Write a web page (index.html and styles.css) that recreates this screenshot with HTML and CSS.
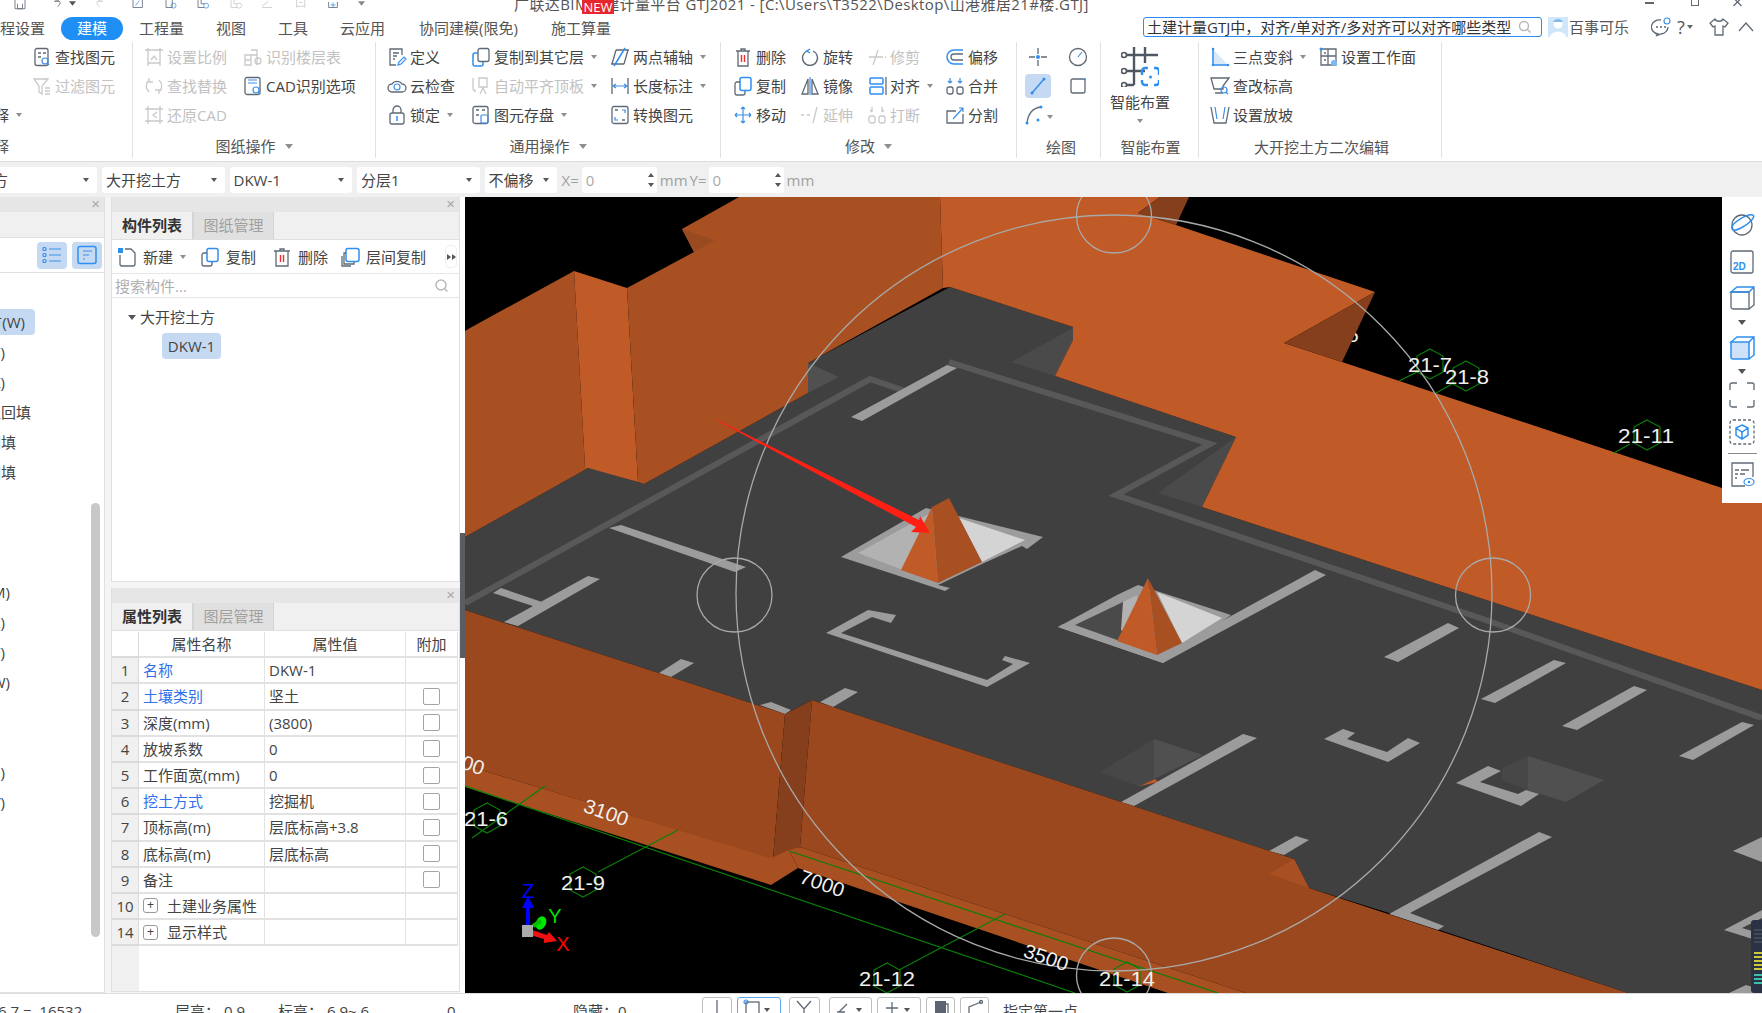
FILE: index.html
```html
<!DOCTYPE html>
<html lang="zh-CN">
<head>
<meta charset="utf-8">
<title>GTJ2021</title>
<link rel="stylesheet" href="styles.css">
</head>
<body>
<div class="app">
  <header class="title">
    <div class="qa">
      <svg class="q q1" viewBox="0 0 20 16"><path class="g" d="M2-6h16v20H2zM6 6v8h8V6"/></svg>
      <svg class="q q2" viewBox="0 0 20 16"><path class="g" d="M5 2c8-3 12 3 4 9M12 2H4"/></svg>
      <svg class="car-svg" viewBox="0 0 8 5"><path d="M0 0h8L4 5z" fill="#555"/></svg>
      <svg class="q q3" viewBox="0 0 20 16"><path class="l" d="M15 2C7-1 3 5 11 11M8 2h8"/></svg>
      <svg class="q q4" viewBox="0 0 20 16"><path class="g" d="M2-6h15v18H2z"/><path class="b" d="M6 9l6-8"/></svg>
      <svg class="q q5" viewBox="0 0 20 16"><path class="g" d="M2-6h10v18H2z"/><circle class="b" cx="14" cy="9" r="4"/></svg>
      <svg class="q q6" viewBox="0 0 20 16"><path class="g" d="M2-6v18h10M7-6v12h6"/><circle class="b" cx="15" cy="9" r="4"/></svg>
      <svg class="q q7" viewBox="0 0 20 16"><path class="l" d="M2-6v18h10M7-6v12h6"/><circle class="l" cx="15" cy="9" r="4"/></svg>
      <svg class="q q8" viewBox="0 0 20 16"><path class="l" d="M2 10l10-8M2 12h16"/></svg>
      <svg class="q q9" viewBox="0 0 20 16"><path class="l" d="M3 12V-4M16 12V-4M3 10h13M7 4h5"/></svg>
      <svg class="q q10" viewBox="0 0 20 16"><path class="b" d="M10 4v8M6 8h8"/><path class="g" d="M3 3v9h14V3"/></svg>
      <svg class="car-svg qc" viewBox="0 0 8 5"><path d="M0 0h8L4 5z" fill="#888"/></svg>
    </div>
    <div class="title-text">广联达BIM土建计量平台 GTJ2021 - [C:\Users\T3522\Desktop\山港雅居21#楼.GTJ]<b class="new">NEW</b></div>
    <div class="win">
      <i class="win-min"></i>
      <i class="win-max"></i>
      <svg class="win-x" viewBox="0 0 10 10"><path class="g" d="M1-2l8 8M9-2L1 6"/></svg>
    </div>
  </header>

  <nav class="tabs">
    <span class="tab first">工程设置</span>
    <span class="tab on">建模</span>
    <span class="tab">工程量</span>
    <span class="tab">视图</span>
    <span class="tab">工具</span>
    <span class="tab">云应用</span>
    <span class="tab tab-co">协同建模(限免)</span>
    <span class="tab tab-su">施工算量</span>
    <div class="tab-right">
      <div class="search">
        <span>土建计量GTJ中，对齐/单对齐/多对齐可以对齐哪些类型</span>
        <svg class="sm" viewBox="0 0 14 14"><circle class="l2" cx="6" cy="6" r="4.5"/><path class="l2" d="M9.5 9.5l3 3"/></svg>
      </div>
      <div class="avatar"><svg viewBox="0 0 20 20"><rect width="20" height="20" fill="#cfe6fb"/><circle cx="10" cy="7" r="4.5" fill="#fff"/><path d="M2 20c1-7 15-7 16 0z" fill="#fff"/><path d="M5 5c2-4 8-4 10 0z" fill="#7db9ee"/></svg></div>
      <span class="user">百事可乐</span>
      <svg class="ti chat" viewBox="0 0 20 20"><path class="g" d="M10 3a8 7 0 1 0-3 14l-2 2 5-2a8 7 0 0 0 7-7"/><circle cx="6" cy="10" r="1" fill="#667"/><circle cx="10" cy="10" r="1" fill="#667"/><circle cx="14" cy="10" r="1" fill="#667"/><circle class="b" cx="16" cy="4" r="3"/></svg>
      <span class="help">?<i class="car tiny"></i></span>
      <svg class="ti shirt" viewBox="0 0 20 20"><path class="g" d="M6 2L1 6l3 4 2-1v9h8V9l2 1 3-4-5-4c-1 3-7 3-8 0z"/></svg>
      <svg class="ti chev" viewBox="0 0 20 20"><path class="g" d="M3 14l7-8 7 8"/></svg>
    </div>
  </nav>

  <section class="ribbon">
    <div class="grp g0">
      <div class="body">
        <div class="col c0">
          <div class="it"><svg class="ic" viewBox="0 0 20 20"><rect class="g" x="3" y="1.5" width="13" height="17" rx="2"/><path class="g" d="M6 6h3M11 6h3M6 10h3"/><circle class="b" cx="13" cy="14" r="3"/><path class="b" d="M15 16l2 2"/></svg><span>查找图元</span></div>
          <div class="it off"><svg class="ic" viewBox="0 0 20 20"><path class="l" d="M2 3h14l-6 7v8l-3-2v-6zM13 12h5M13 15h5M13 18h5"/></svg><span>过滤图元</span></div>
          <div class="it neg"><span>图纸注释</span><i class="car"></i></div>
        </div>
      </div>
      <div class="lab lab0">图纸注释</div>
    </div>

    <div class="grp g1">
      <div class="body">
        <div class="col c1">
          <div class="it off"><svg class="ic" viewBox="0 0 20 20"><path class="l" d="M1 3h18M4 1v18M16 1v18M4 16h12M7 13l3-4 3 4"/></svg><span>设置比例</span></div>
          <div class="it off"><svg class="ic" viewBox="0 0 20 20"><path class="l" d="M4 5a8 8 0 0 0 1 11M16 15a8 8 0 0 0-1-11M5 2v4h4M15 18v-4h-4"/></svg><span>查找替换</span></div>
          <div class="it off"><svg class="ic" viewBox="0 0 20 20"><path class="l" d="M1 4h18M4 1v18M16 1v18M1 16h18M13 7l-4 3 4 3"/></svg><span>还原CAD</span></div>
        </div>
        <div class="col c2">
          <div class="it off"><svg class="ic" viewBox="0 0 20 20"><path class="l" d="M2 18V8h6v10zM8 3h6v15M2 13h6M8 8h6"/><circle class="l" cx="15" cy="14" r="3"/></svg><span>识别楼层表</span></div>
          <div class="it"><svg class="ic" viewBox="0 0 20 20"><rect class="g" x="2" y="1.5" width="15" height="17" rx="2"/><path class="b" d="M5 7h9M5 4h9"/><circle class="b" cx="13" cy="14" r="3"/><path class="b" d="M15 16l2 2"/></svg><span>CAD识别选项</span></div>
          <div class="it"></div>
        </div>
      </div>
      <div class="lab">图纸操作<i class="car"></i></div>
    </div>

    <div class="grp g2">
      <div class="body">
        <div class="col c3">
          <div class="it"><svg class="ic" viewBox="0 0 20 20"><path class="g" d="M15 8V2H3v16h6M6 6h6M6 9h4M6 12h2"/><path class="b" d="M11 18l1-3 5-5 2 2-5 5z"/></svg><span>定义</span></div>
          <div class="it"><svg class="ic" viewBox="0 0 20 20"><path class="g" d="M5 16a4 4 0 0 1 0-8 6 6 0 0 1 10 0 4 4 0 0 1 0 8z"/><circle class="b" cx="10" cy="11" r="3"/></svg><span>云检查</span></div>
          <div class="it"><svg class="ic" viewBox="0 0 20 20"><rect class="g" x="3" y="8" width="14" height="11" rx="2"/><path class="g" d="M6 8V5a4 4 0 0 1 8 0v3"/><path class="b2" d="M10 11v5"/></svg><span>锁定</span><i class="car"></i></div>
        </div>
        <div class="col c4">
          <div class="it"><svg class="ic" viewBox="0 0 20 20"><rect class="g" x="7" y="1.5" width="11" height="13" rx="2"/><path class="b2" d="M7 6H4a2 2 0 0 0-2 2v9a2 2 0 0 0 2 2h6a2 2 0 0 0 2-2v-2"/></svg><span>复制到其它层</span><i class="car"></i></div>
          <div class="it off"><svg class="ic" viewBox="0 0 20 20"><path class="l" d="M2 2v10a3 3 0 0 0 3 3M8 2h8v9h-8zM9 18l3-6 3 6"/></svg><span>自动平齐顶板</span><i class="car"></i></div>
          <div class="it"><svg class="ic" viewBox="0 0 20 20"><rect class="g" x="2" y="1.5" width="15" height="17" rx="2"/><path class="g" d="M5 5h3M11 5h3M5 10h3"/><rect class="b" x="10" y="10" width="7" height="8" rx="1"/></svg><span>图元存盘</span><i class="car"></i></div>
        </div>
        <div class="col c5">
          <div class="it"><svg class="ic" viewBox="0 0 20 20"><path class="g" d="M6 3h13M1 17h13M6 3L2 17M18 3l-4 14"/><path class="b2" d="M15 1L4 19"/></svg><span>两点辅轴</span><i class="car"></i></div>
          <div class="it"><svg class="ic" viewBox="0 0 20 20"><path class="g" d="M2 2v16M18 2v16"/><path class="b" d="M3 10h14M3 10l3-2M3 10l3 2M17 10l-3-2M17 10l-3 2"/></svg><span>长度标注</span><i class="car"></i></div>
          <div class="it"><svg class="ic" viewBox="0 0 20 20"><rect class="g" x="2" y="1.5" width="16" height="17" rx="2"/><path class="b" d="M12 5h3v3M8 15H5v-3"/><path class="g" d="M5 5h3M12 15h3"/></svg><span>转换图元</span></div>
        </div>
      </div>
      <div class="lab">通用操作<i class="car"></i></div>
    </div>

    <div class="grp g3">
      <div class="body">
        <div class="col c6">
          <div class="it"><svg class="ic" viewBox="0 0 20 20"><path class="g" d="M3 4h14M8 4V2h4v2M5 4v15h10V4"/><path class="r" d="M8.500 8v7M11.500 8v7"/></svg><span>删除</span></div>
          <div class="it"><svg class="ic" viewBox="0 0 20 20"><rect class="b2" x="7" y="1.500" width="11" height="13" rx="2"/><path class="g" d="M7 6H4a2 2 0 0 0-2 2v9a2 2 0 0 0 2 2h6a2 2 0 0 0 2-2v-2"/></svg><span>复制</span></div>
          <div class="it"><svg class="ic" viewBox="0 0 20 20"><path class="b" d="M10 2v16M2 10h16M10 2L8 4M10 2l2 2M10 18l-2-2M10 18l2-2M2 10l2-2M2 10l2 2M18 10l-2-2M18 10l-2 2"/></svg><span>移动</span></div>
        </div>
        <div class="col c7">
          <div class="it"><svg class="ic" viewBox="0 0 20 20"><path class="g" d="M13 4a7.500 7.500 0 1 1-6 0"/><path class="b2" d="M10 2l-3 2 3 2"/></svg><span>旋转</span></div>
          <div class="it"><svg class="ic" viewBox="0 0 20 20"><path class="g" d="M8 3L2 18h6zM12 3l6 15h-6z"/><path class="b" d="M10 1v18"/></svg><span>镜像</span></div>
          <div class="it off"><svg class="ic" viewBox="0 0 20 20"><path class="l" d="M1 10h3M7 10h3M13 18l4-16"/></svg><span>延伸</span></div>
        </div>
        <div class="col c8">
          <div class="it off"><svg class="ic" viewBox="0 0 20 20"><path class="l" d="M2 10h14M11 3L6 18M18 10h1"/></svg><span>修剪</span></div>
          <div class="it"><svg class="ic" viewBox="0 0 20 20"><rect class="b2" x="3" y="2" width="13" height="6" rx="1"/><rect class="b2" x="3" y="11" width="13" height="7" rx="1"/><path class="g" d="M19 1v18"/></svg><span>对齐</span><i class="car"></i></div>
          <div class="it off"><svg class="ic" viewBox="0 0 20 20"><rect class="l" x="2" y="11" width="6" height="7" rx="2"/><rect class="l" x="12" y="11" width="6" height="7" rx="2"/><path class="l" d="M5 2v5M15 2v5M5 7l-2-2M15 7l2-2"/></svg><span>打断</span></div>
        </div>
        <div class="col c9">
          <div class="it"><svg class="ic" viewBox="0 0 20 20"><path class="b2" d="M18 3H9a7 7 0 0 0 0 14h9"/><path class="g" d="M18 7H9a3 3 0 0 0 0 6h9"/></svg><span>偏移</span></div>
          <div class="it"><svg class="ic" viewBox="0 0 20 20"><rect class="g" x="2" y="11" width="6" height="7" rx="2"/><rect class="g" x="12" y="11" width="6" height="7" rx="2"/><path class="b" d="M5 2v5M15 2v5M5 7l-2-2M5 7l2-2M15 7l-2-2M15 7l2-2"/></svg><span>合并</span></div>
          <div class="it"><svg class="ic" viewBox="0 0 20 20"><path class="g" d="M18 9v9H2V6h9"/><path class="b" d="M8 14L18 3M14 3h4v4"/></svg><span>分割</span></div>
        </div>
      </div>
      <div class="lab">修改<i class="car"></i></div>
    </div>

    <div class="grp g4">
      <div class="draw">
        <div class="dc"><svg class="ic" viewBox="0 0 20 20"><path class="g" d="M10 1v6M10 13v6M1 10h6M13 10h6"/><circle cx="10" cy="10" r="2" fill="#2f8ff0"/></svg></div>
        <div class="dc"><svg class="ic" viewBox="0 0 20 20"><circle class="g" cx="10" cy="10" r="8.500"/><path class="b" d="M10 10l4-5"/></svg></div>
        <div class="dc dc-on"><svg class="ic" viewBox="0 0 20 20"><path class="b2" d="M4 17L16 3"/><circle cx="4" cy="17" r="1.500" fill="#2f8ff0"/><circle cx="16" cy="3" r="1.500" fill="#2f8ff0"/></svg></div>
        <div class="dc"><svg class="ic" viewBox="0 0 20 20"><rect class="g" x="3" y="3" width="14" height="14" rx="2"/><circle cx="17" cy="3" r="1" fill="#2f8ff0"/></svg></div>
        <div class="dc dc-arc"><svg class="ic" viewBox="0 0 20 20"><path class="g" d="M3 18C4 9 9 3 17 2"/><circle cx="3" cy="18" r="1.500" fill="#2f8ff0"/><circle cx="17" cy="2" r="1.500" fill="#2f8ff0"/><circle cx="14" cy="15" r="1.500" fill="#2f8ff0"/></svg><i class="car"></i></div>
      </div>
      <div class="lab">绘图</div>
    </div>

    <div class="grp g5">
      <div class="smart">
        <svg class="big" viewBox="0 0 38 40"><path class="gt" d="M13 0v38M24 0v16M4 8h33M4 24h20M4 38h9"/><circle class="gtf" cx="3" cy="8" r="2.500"/><circle class="gtf" cx="3" cy="24" r="2.500"/><circle class="gtf" cx="3" cy="38" r="2.500"/><path class="bt" d="M21 28v-4a3 3 0 0 1 3-3h3M33 21h2a3 3 0 0 1 3 3v4M38 33v2a3 3 0 0 1-3 3h-2M27 38h-3a3 3 0 0 1-3-3v-2"/><circle cx="29.500" cy="30" r="1.500" fill="#2f8ff0"/></svg>
        <span>智能布置</span>
        <i class="car"></i>
      </div>
      <div class="lab">智能布置</div>
    </div>

    <div class="grp g6">
      <div class="body">
        <div class="col c10">
          <div class="it"><svg class="ic" viewBox="0 0 20 20"><path d="M3 2v16h15z" fill="#d9e9fa"/><path class="b2" d="M3 2v16h15"/><circle cx="3" cy="2" r="1.300" fill="#2f8ff0"/><circle cx="3" cy="18" r="1.300" fill="#2f8ff0"/><circle cx="18" cy="18" r="1.300" fill="#2f8ff0"/></svg><span>三点变斜</span><i class="car"></i></div>
          <div class="it"><svg class="ic" viewBox="0 0 20 20"><path class="g" d="M1 2h18l-6 8v3H7l-3 0zM5 17h8"/><circle class="b" cx="14" cy="14" r="3"/><path class="b" d="M16 16l2 2"/></svg><span>查改标高</span></div>
          <div class="it"><svg class="ic" viewBox="0 0 20 20"><path class="g" d="M1 2l3 16h12l3-16"/><path class="b" d="M5 2l2 12M15 2l-2 12"/></svg><span>设置放坡</span></div>
        </div>
        <div class="col c11">
          <div class="it"><svg class="ic" viewBox="0 0 20 20"><path class="g" d="M3 2h15v16H3zM3 9h15M10 2v16M6 6h2M6 13h2"/><circle cx="3" cy="2" r="1.500" fill="#2f8ff0"/><circle cx="16" cy="16" r="3" fill="#7db9ee"/></svg><span>设置工作面</span></div>
        </div>
      </div>
      <div class="lab">大开挖土方二次编辑</div>
    </div>
    <div class="grp-fill"></div>
  </section>

  <section class="bar">
    <div class="sel sel0"><span>大开挖土方</span><i class="car dk"></i></div>
    <div class="sel sel1"><span>大开挖土方</span><i class="car dk"></i></div>
    <div class="sel sel1"><span>DKW-1</span><i class="car dk"></i></div>
    <div class="sel sel1"><span>分层1</span><i class="car dk"></i></div>
    <div class="sel sel2"><span>不偏移</span><i class="car dk"></i></div>
    <span class="fld">X=</span>
    <div class="num"><span>0</span><b class="spin"><i class="sp-up"></i><i class="car dk"></i></b></div>
    <span class="fld mm">mm</span><span class="fld fy">Y=</span>
    <div class="num"><span>0</span><b class="spin"><i class="sp-up"></i><i class="car dk"></i></b></div>
    <span class="fld mm">mm</span>
  </section>

  <main class="work">
    <aside class="nav">
      <div class="phead"><span class="x">×</span></div>
      <div class="nav-band"></div>
      <div class="nav-tools">
        <span class="nbtn"><svg class="ic" viewBox="0 0 20 20"><path class="b" d="M7 4h12M7 10h12M7 16h12"/><rect class="b" x="1" y="2.500" width="3" height="3" rx="1"/><rect class="b" x="1" y="8.500" width="3" height="3" rx="1"/><rect class="b" x="1" y="14.500" width="3" height="3" rx="1"/></svg></span>
        <span class="nbtn"><svg class="ic" viewBox="0 0 20 20"><rect class="b2" x="1" y="1.500" width="18" height="17" rx="2"/><path class="b" d="M6 6h9M6 10h6M6 14h2"/></svg></span>
      </div>
      <ul class="list">
        <li class="li on e25"><span>大开挖土方(W)</span></li>
        <li class="li e5"><span>基槽土方(C)</span></li>
        <li class="li e5"><span>基坑土方(K)</span></li>
        <li class="li e31"><span>大开挖灰土回填</span></li>
        <li class="li e16"><span>基槽灰土回填</span></li>
        <li class="li e16"><span>基坑灰土回填</span></li>
        <li class="li"></li><li class="li"></li><li class="li"></li>
        <li class="li e10"><span>筏板基础(M)</span></li>
        <li class="li e5"><span>筏板主筋(R)</span></li>
        <li class="li e5"><span>筏板负筋(F)</span></li>
        <li class="li e10"><span>基础板带(W)</span></li>
        <li class="li"></li><li class="li"></li>
        <li class="li e5"><span>独立基础(D)</span></li>
        <li class="li e5"><span>桩承台(V)</span></li>
      </ul>
      <div class="vbar"></div>
    </aside>

    <div class="side">
      <section class="panel p-top">
        <div class="phead"><span class="x">×</span></div>
        <div class="ptabs"><span class="pt on">构件列表</span><span class="pt">图纸管理</span></div>
        <div class="ptools">
          <span class="pb pb1"><svg class="ic" viewBox="0 0 20 20"><path class="g" d="M3 8v9a2 2 0 0 0 2 2h11a2 2 0 0 0 2-2V6l-4-4H8"/><rect x="1" y="1" width="5" height="5" fill="#2f8ff0"/></svg>新建<i class="car"></i></span>
          <span class="pb pb2"><svg class="ic" viewBox="0 0 20 20"><rect class="b2" x="7" y="1.500" width="11" height="13" rx="2"/><path class="g" d="M7 6H4a2 2 0 0 0-2 2v9a2 2 0 0 0 2 2h6a2 2 0 0 0 2-2v-2"/></svg>复制</span>
          <span class="pb pb3"><svg class="ic" viewBox="0 0 20 20"><path class="g" d="M2 4h16M8 4V2h4v2M4 4v15h12V4"/><path class="r" d="M8.500 8v7M11.500 8v7"/></svg>删除</span>
          <span class="pb pb4"><svg class="ic" viewBox="0 0 20 20"><rect class="b2" x="6" y="1.500" width="13" height="13" rx="2"/><path class="g" d="M6 6H4v11h10v-2M2 9v10h9"/></svg>层间复制</span>
          <span class="more"><i></i><i></i></span>
        </div>
        <div class="psearch"><span>搜索构件...</span><svg class="sm" viewBox="0 0 14 14"><circle class="l2" cx="6" cy="6" r="5"/><path class="l2" d="M9.500 9.500l3 3"/></svg></div>
        <div class="tree">
          <div class="tr"><i class="car dk"></i>大开挖土方</div>
          <div class="leaf">DKW-1</div>
        </div>
      </section>

      <section class="panel p-bot">
        <div class="phead"><span class="x">×</span></div>
        <div class="ptabs"><span class="pt on">属性列表</span><span class="pt">图层管理</span></div>
        <div class="table">
          <div class="c idx blank"></div><div class="c h">属性名称</div><div class="c h">属性值</div><div class="c h">附加</div>
          <div class="c idx">1</div><div class="c n blue">名称</div><div class="c v">DKW-1</div><div class="c k"></div>
          <div class="c idx">2</div><div class="c n blue">土壤类别</div><div class="c v">坚土</div><div class="c k"><i class="cb"></i></div>
          <div class="c idx">3</div><div class="c n">深度(mm)</div><div class="c v">(3800)</div><div class="c k"><i class="cb"></i></div>
          <div class="c idx">4</div><div class="c n">放坡系数</div><div class="c v">0</div><div class="c k"><i class="cb"></i></div>
          <div class="c idx">5</div><div class="c n">工作面宽(mm)</div><div class="c v">0</div><div class="c k"><i class="cb"></i></div>
          <div class="c idx">6</div><div class="c n blue">挖土方式</div><div class="c v">挖掘机</div><div class="c k"><i class="cb"></i></div>
          <div class="c idx">7</div><div class="c n">顶标高(m)</div><div class="c v">层底标高+3.8</div><div class="c k"><i class="cb"></i></div>
          <div class="c idx">8</div><div class="c n">底标高(m)</div><div class="c v">层底标高</div><div class="c k"><i class="cb"></i></div>
          <div class="c idx">9</div><div class="c n">备注</div><div class="c v"></div><div class="c k"><i class="cb"></i></div>
          <div class="c idx">10</div><div class="c n"><i class="plus">+</i>土建业务属性</div><div class="c v"></div><div class="c k"></div>
          <div class="c idx">14</div><div class="c n"><i class="plus">+</i>显示样式</div><div class="c v"></div><div class="c k"></div>
        </div>
        <div class="tfill"><div class="tfill-idx"></div></div>
      </section>
    </div>

    <div class="splitter"><div class="handle"></div></div>

    <div class="view">
      <svg class="scene" viewBox="465 197 1297 796" preserveAspectRatio="none">
        <rect x="465" y="197" width="1297" height="796" fill="#000"/>
        <text class="lb" x="1353" y="342" text-anchor="middle">5</text>

        <polygon class="floor" points="465,537 590,467 644,484 808,393 808,363 950,287 1073,327 1073,340 1055,376 1236,437 1202,507 1762,690 1762,993 1628,993 1389,913 1309,888 1294,859 812,700 785,714 465,610"/>
        <polygon class="f2" points="808,363 839,377 808,393"/>
        <polygon class="f3" points="1073,328 1011,362 1055,376 1073,340"/>
        <polygon class="f3" points="1236,437 1158,493 1202,507"/>

        <polyline class="beam" points="465,603 870,379 905,391"/>
        <polyline class="beam" points="949,362 1210,444 1116,495 1480,618 1762,718"/>

        <polygon class="dk1" points="1100,772 1154,739 1154,779 1140,787"/>
        <polygon class="dk2" points="1154,739 1203,755 1154,779"/>
        <polygon class="or" points="1155,779 1140,786 1158,782"/>
        <polygon class="dk1" points="1501,780 1503,768 1528,756 1528,790"/>
        <polygon class="dk2" points="1528,756 1604,780 1566,802 1528,790"/>

        <g class="bars">
          <polygon points="947,365 957,368 862,421 851,417"/>
          <polygon points="609,528 621,525 746,567 735,572"/>
          <polygon points="588,576 600,579 518,626 504,622"/>
          <polygon points="501,588 545,603 536,607 493,593"/>
          <polygon points="681,659 694,663 671,677 659,673"/>
          <polygon points="845,688 858,692 833,707 820,702"/>
          <polygon points="760,705 771,702 791,710 785,714"/>
          <polygon points="868,610 896,615 891,623 872,617 841,633 987,680 1013,664 1002,660 1005,656 1030,663 987,687 826,633"/>
          <polygon points="1448,623 1459,628 1398,662 1384,657"/>
          <polygon points="1554,660 1566,663 1495,703 1481,699"/>
          <polygon points="1634,686 1647,690 1577,730 1562,726"/>
          <polygon points="1742,722 1754,725 1693,760 1679,756"/>
          <polygon points="1243,734 1257,738 1134,806 1121,802"/>
          <polygon points="1343,729 1355,733 1347,739 1387,752 1408,738 1420,743 1388,762 1324,739"/>
          <polygon points="1296,836 1309,840 1284,855 1269,851"/>
          <polygon points="1539,832 1552,837 1410,913 1444,926 1438,930 1389,914"/>
          <polygon points="1488,766 1501,771 1480,782 1518,794 1526,790 1539,794 1521,806 1456,783"/>
          <polygon points="1762,837 1733,851 1762,862"/>
          <polygon points="1762,910 1724,930 1762,942 1762,934 1742,928 1762,918"/>
          <polygon points="1729,993 1746,985 1762,990 1762,993"/>
          <polygon points="1315,570 1326,575 1163,663 1058,627 1063,624 1160,655"/>
        </g>

        <polygon class="rim" points="841,557 926,508 1043,537 1027,549 1022,546 982,564 938,585 950,588 945,591"/>
        <polygon class="lt1" points="858,553 932,512 936,560 903,570"/>
        <polygon class="lt2" points="959,518 1025,540 982,562"/>
        <polygon class="or" points="932,507 901,570 938,583"/>
        <polygon class="ord" points="932,507 949,498 982,562 938,583"/>

        <polygon class="rim" points="1117,595 1138,585 1231,615 1163,663 1058,627"/>
        <polygon class="f3" points="1075,625 1123,602 1150,600 1120,641"/>
        <polygon class="lt1" points="1123,602 1137,595 1142,640 1121,630"/>
        <polygon class="lt2" points="1157,592 1222,618 1182,643"/>
        <polygon class="or" points="1148,578 1117,641 1157,655"/>
        <polygon class="ord" points="1148,578 1182,643 1157,655"/>

        <polygon class="ord" points="470,328 574,271 585,467 590,467 465,537 465,331"/>
        <polygon class="or" points="574,271 627,288 638,482 585,467"/>
        <polygon class="ord" points="627,288 694,252 682,229 739,197 940,197 943,288 808,363 808,393 644,484 638,482"/>
        <polygon class="wedge" points="682,229 715,240 694,252"/>
        <polygon class="or" points="940,197 1160,197 1138,213 1176,225 1375,292 1284,343 1342,362 1722,488 1762,501 1762,690 1202,507 1236,437 1055,376 1073,340 1073,327 950,287 943,288"/>
        <polygon class="wedge2" points="1138,213 1160,197 1189,197 1176,225"/>
        <polygon class="wedge2" points="1375,292 1284,343 1342,362"/>

        <polygon class="wall" points="465,610 785,714 773,859 465,765"/>
        <polygon class="ord" points="465,765 771,858 771,885 465,787"/>
        <polygon class="wedge2" points="785,714 812,700 800,847 773,859"/>
        <polygon class="ord" points="771,858 789,850 798,868 771,885"/>
        <polygon class="wall" points="812,700 1294,859 1309,888 1628,993 1246,993 800,847"/>
        <polygon class="ord" points="800,847 1246,993 1168,993 798,868 789,850"/>
        <polygon class="ord" points="1294,859 1269,874 1309,888"/>

        <g class="grn">
          <path d="M465 786L1075 993M789 851L1218 993M545 786L472 838M678 830L598 872M1005 914L899 970M1399 381L1417 372M1436 393L1452 384M1614 453L1630 444"/>
          <polygon points="487,803 500,810 500,826 487,833 474,826 474,810"/>
          <polygon points="583,867 596,874 596,890 583,897 570,890 570,874"/>
          <polygon points="887,963 900,970 900,986 887,993 874,986 874,970"/>
          <polygon points="1127,962 1140,969 1140,985 1127,992 1114,985 1114,969"/>
          <polygon points="1430,349 1443,356 1443,372 1430,379 1417,372 1417,356"/>
          <polygon points="1466,361 1479,368 1479,384 1466,391 1453,384 1453,368"/>
          <polygon points="1647,420 1660,427 1660,443 1647,450 1634,443 1634,427"/>
        </g>

        <g class="circ">
          <circle cx="1114" cy="593" r="378"/>
          <ellipse cx="734.500" cy="595" rx="37.500" ry="37"/>
          <ellipse cx="1114" cy="216" rx="37.500" ry="37"/>
          <ellipse cx="1493" cy="595" rx="37.500" ry="37"/>
          <ellipse cx="1114" cy="975" rx="37.500" ry="37"/>
        </g>

        <text class="lb" x="486" y="826" text-anchor="middle" textLength="44" lengthAdjust="spacingAndGlyphs">21-6</text>
        <text class="lb" x="583" y="890" text-anchor="middle" textLength="44" lengthAdjust="spacingAndGlyphs">21-9</text>
        <text class="lb" x="887" y="986" text-anchor="middle" textLength="56" lengthAdjust="spacingAndGlyphs">21-12</text>
        <text class="lb" x="1127" y="986" text-anchor="middle" textLength="56" lengthAdjust="spacingAndGlyphs">21-14</text>
        <text class="lb" x="1430" y="372" text-anchor="middle" textLength="44" lengthAdjust="spacingAndGlyphs">21-7</text>
        <text class="lb" x="1467" y="384" text-anchor="middle" textLength="44" lengthAdjust="spacingAndGlyphs">21-8</text>
        <text class="lb" x="1646" y="443" text-anchor="middle" textLength="56" lengthAdjust="spacingAndGlyphs">21-11</text>
        <text class="lb" transform="translate(604,819) rotate(19)" text-anchor="middle" textLength="46" lengthAdjust="spacingAndGlyphs">3100</text>
        <text class="lb" transform="translate(820,890) rotate(19)" text-anchor="middle" textLength="46" lengthAdjust="spacingAndGlyphs">7000</text>
        <text class="lb" transform="translate(1044,964) rotate(19)" text-anchor="middle" textLength="46" lengthAdjust="spacingAndGlyphs">3500</text>
        <text class="lb" transform="translate(460,768) rotate(19)" text-anchor="middle" textLength="46" lengthAdjust="spacingAndGlyphs">3100</text>

        <polygon class="arrow" points="718,420 919,520 920,516 930,533 911,532 916,527 718,421"/>

        <rect x="526" y="905" width="4" height="24" fill="#0000ff"/>
        <polygon points="528,896 522,908 534,908" fill="#0000ff"/>
        <ellipse cx="541" cy="923" rx="5" ry="7" fill="#00e600" transform="rotate(25 541 923)"/>
        <path d="M533 926L541 921" stroke="#00c000" stroke-width="4"/>
        <polygon points="532,930 547,935 549,932 557,941 544,943 544,939 530,935" fill="#ee1111"/>
        <rect x="522" y="925" width="11" height="12" fill="#aaaaaa"/>
        <text class="ax ax-z" x="528" y="898" text-anchor="middle">Z</text>
        <text class="ax ax-y" x="555" y="923" text-anchor="middle">Y</text>
        <text class="ax ax-x" x="563" y="951" text-anchor="middle">X</text>

        <rect x="1751" y="920" width="14" height="73" rx="3" fill="#2c3245"/>
        <path d="M1754 930h8M1754 934h8M1754 938h8M1754 942h8" stroke="#566" stroke-width="1"/>
        <path d="M1754 953h8M1754 957h8M1754 961h8M1754 965h8M1754 969h8" stroke="#c9c93a" stroke-width="2"/>
        <path d="M1754 975h8M1754 979h8M1754 983h8" stroke="#3ebfa8" stroke-width="2"/>
      </svg>

      <div class="vtools">
        <svg viewBox="0 0 26 26" class="vt"><ellipse class="g" cx="13" cy="13" rx="10" ry="10"/><path class="b2" d="M3 17C1 12 18 1 24 3c3 2-4 9-12 13-4 2-8 3-9 1z"/></svg>
        <svg viewBox="0 0 26 26" class="vt mt11"><rect class="g" x="2" y="2" width="22" height="22" rx="2"/><text class="t2d" x="4" y="21">2D</text></svg>
        <svg viewBox="0 0 26 26" class="vt mt9"><path class="g" d="M2 8h18v17H4a2 2 0 0 1-2-2zM20 25l5-4V4"/><path class="b2" d="M2 8l6-5h17l-5 5z"/></svg>
        <i class="car dk vcar mt10"></i>
        <svg viewBox="0 0 26 26" class="vt mt9"><path d="M2 8h18v17H4a2 2 0 0 1-2-2z" fill="#cfe1f9"/><path class="b2" d="M2 8h18v17H4a2 2 0 0 1-2-2zM20 25l5-4V4M2 8l6-5h17l-5 5z"/></svg>
        <i class="car dk vcar mt9"></i>
        <svg viewBox="0 0 26 26" class="vt mt8"><path class="g" d="M1 8V3a2 2 0 0 1 2-2h5M18 1h5a2 2 0 0 1 2 2v5M25 18v5a2 2 0 0 1-2 2h-5M8 25H3a2 2 0 0 1-2-2v-5"/></svg>
        <svg viewBox="0 0 26 26" class="vt mt11"><rect class="g dash" x="1" y="1" width="24" height="24" rx="3"/><path class="b2" d="M13 6l6 3v7l-6 4-6-4V9zM7 9l6 4 6-4M13 13v7"/></svg>
        <i class="vsep mt8"></i>
        <svg viewBox="0 0 26 26" class="vt mt7"><path class="g" d="M16 25H3V2h21v14M6 9h4M12 9h8M6 13h3M11 13h5M6 17h2"/><ellipse class="b" cx="20" cy="21" rx="5" ry="3.500"/><circle cx="20" cy="21" r="1.300" fill="#2f8ff0"/></svg>
      </div>
    </div>
  </main>

  <footer class="status">
    <span class="st s1">6.7 =&nbsp;&nbsp;16532</span>
    <span class="st s2">层高：&nbsp;0.9</span>
    <span class="st s3">标高：&nbsp;6.9~ 6</span>
    <span class="st s4">0</span>
    <span class="st s5">隐藏：0</span>
    <div class="sb b1"><svg viewBox="0 0 20 20"><path class="g" d="M10 2v16"/></svg></div>
    <div class="sb b2x on"><svg viewBox="0 0 20 20"><rect class="g" x="4" y="4" width="13" height="14"/><circle class="b" cx="4" cy="4" r="2"/></svg><i class="car dk"></i></div>
    <div class="sb b3x"><svg viewBox="0 0 20 20"><path class="g" d="M3 3l7 8 7-8M10 11v8"/></svg></div>
    <div class="sb b4x"><svg viewBox="0 0 20 20"><path class="g" d="M5 14l8-8M3 14h8"/></svg><i class="car dk"></i></div>
    <div class="sb b5x"><svg viewBox="0 0 20 20"><path class="g" d="M10 4v12M4 10h12"/></svg><i class="car dk"></i></div>
    <div class="sb b6x"><svg viewBox="0 0 20 20"><rect x="4" y="3" width="11" height="14" fill="#5c6472"/><path class="g" d="M15 6h2v10"/></svg></div>
    <div class="sb b7x"><svg viewBox="0 0 20 20"><path class="g" d="M4 18V9l12-5"/><circle class="g" cx="16" cy="4" r="1.500"/></svg></div>
    <span class="st s6">指定第一点</span>
  </footer>
</div>
</body>
</html>
```

FILE: styles.css
```css
* { box-sizing: border-box; }
html, body { margin: 0; padding: 0; }
body { width: 1762px; height: 1013px; overflow: hidden; background: #fff; color: #444; font: 15px/20px "Open Sans", "Noto Sans CJK SC", sans-serif; }
i { font-style: normal; display: inline-block; }
ul { list-style: none; margin: 0; padding: 0; }
svg { display: block; flex: none; fill: none; }

.g { stroke: #5f6975; stroke-width: 1.3; fill: none; }
.l { stroke: #c9c9c9; stroke-width: 1.3; fill: none; }
.l2 { stroke: #b9b9b9; stroke-width: 1.5; fill: none; }
.b { stroke: #3a8fe8; stroke-width: 1.2; fill: none; }
.b2 { stroke: #2f8ff0; stroke-width: 1.5; fill: none; }
.r { stroke: #f02c2c; stroke-width: 1.4; fill: none; }
.gt { stroke: #4f5862; stroke-width: 2.4; fill: none; }
.gtf { stroke: #4f5862; stroke-width: 1.6; fill: #fff; }
.bt { stroke: #2f8ff0; stroke-width: 2.4; fill: none; }

.car { width: 0; height: 0; border-left: 3.5px solid transparent; border-right: 3.5px solid transparent; border-top: 4px solid #8f8f8f; margin-left: 7px; flex: none; }
.car.dk { border-top-color: #555; }

.app { width: 1762px; height: 1013px; display: flex; flex-direction: column; overflow: hidden; }

/* title */
.title { height: 14px; flex: none; display: flex; overflow: hidden; background: #fff; }
.qa { width: 514px; flex: none; display: flex; padding-left: 8px; }
.q { width: 20px; height: 10px; }
.q1 { margin-left: 2px; }
.q2 { margin-left: 20px; width: 16px; }
.car-svg { width: 7px; height: 5px; margin: 1px 0 0 3px; }
.q3 { margin-left: 13px; }
.q4 { margin-left: 19px; }
.q5 { margin-left: 13px; }
.q6 { margin-left: 12px; }
.q7 { margin-left: 13px; }
.q8 { margin-left: 11px; }
.q9 { margin-left: 14px; }
.q10 { margin-left: 12px; }
.qc { margin-left: 15px; }
.title-text { width: 1100px; flex: none; position: relative; font-size: 15px; line-height: 14px; margin-top: -3px; color: #555; white-space: nowrap; letter-spacing: .4px; }
.new { position: absolute; left: 68px; top: 3px; width: 32px; height: 14px; background: #e5262c; color: #fff; font-weight: 400; font-size: 13px; line-height: 14px; letter-spacing: 0; text-align: center; }
.win { position: absolute; left: 0; top: 0; width: 1762px; height: 14px; display: flex; pointer-events: none; }
.win-min { width: 9px; height: 2px; margin: 2px 0 0 1645px; background: #666; }
.win-max { width: 8px; height: 6px; margin: 0 0 0 37px; border: 1px solid #666; border-top: 0; }
.win-x { width: 11px; height: 10px; margin-left: 33px; }

/* tabs */
.tabs { height: 26px; flex: none; display: flex; align-items: flex-start; padding-top: 3px; background: #fff; white-space: nowrap; font-size: 15px; color: #555; position: relative; }
.tab { height: 23px; line-height: 22px; padding: 0 16px; border-radius: 12px; }
.tab.first { margin-left: -31px; }
.tab.on { background: #1f8ff5; color: #fff; }
.tab-co { margin-left: 2px; }
.tab-su { margin-left: 1px; }
.tab-right { margin-left: auto; display: flex; align-items: center; height: 20px; }
.search { width: 399px; height: 20px; border: 1.5px solid #2a8cf0; border-radius: 3px; display: flex; align-items: center; justify-content: space-between; padding: 0 9px 0 3px; color: #333; font-size: 15px; }
.sm { width: 14px; height: 14px; }
.avatar { width: 20px; height: 20px; margin-left: 6px; }
.avatar svg { width: 20px; height: 20px; }
.user { margin-left: 1px; width: 60px; font-size: 15px; }
.ti { width: 20px; height: 20px; }
.chat { margin-left: 22px; }
.help { width: 20px; margin-left: 6px; font-size: 18px; display: flex; align-items: center; }
.car.tiny { margin-left: 2px; border-top-color: #666; }
.shirt { margin-left: 12px; }
.chev { margin-left: 7px; margin-right: 6px; }

/* ribbon */
.ribbon { height: 122px; flex: none; display: flex; background: #fff; padding-top: 2px; border-bottom: 1px solid #dcdcdc; }
.grp { height: 116px; border-right: 1px solid #e2e2e2; display: flex; flex-direction: column; flex: none; }
.grp-fill { flex: 1; }
.g0 { width: 133px; overflow: visible; }
.g1 { width: 243px; padding-left: 11px; }
.g2 { width: 345px; padding-left: 11px; }
.g3 { width: 296px; padding-left: 12px; }
.g4 { width: 84px; }
.g5 { width: 98px; }
.g6 { width: 243px; padding-left: 11px; }
.g1 .lab, .g2 .lab { margin-left: -11px; }
.g3 .lab { margin-left: -12px; }
.body { display: flex; flex: none; height: 87px; }
.col { display: flex; flex-direction: column; flex: none; }
.c0 { padding-left: 32px; width: 133px; }
.c1 { width: 99px; }
.c2 { width: 130px; }
.c3 { width: 84px; }
.c4 { width: 139px; }
.c5 { width: 110px; }
.c6 { width: 67px; }
.c7 { width: 67px; }
.c8 { width: 78px; }
.c9 { width: 70px; }
.c10 { width: 108px; }
.c11 { width: 120px; }
.it { height: 29px; display: flex; align-items: center; white-space: nowrap; color: #444; }
.it.off { color: #c2c2c2; }
.ic { width: 20px; height: 20px; margin-right: 3px; }
.neg { margin-left: -83px; }
.lab { height: 28px; line-height: 28px; text-align: center; color: #555; display: flex; align-items: center; justify-content: center; white-space: nowrap; margin-top: 3px; }
.lab .car { margin-left: 9px; border-left-width: 4px; border-right-width: 4px; border-top-width: 5px; }
.lab0 { justify-content: flex-start; margin-left: -51px; }
.draw { display: grid; grid-template-columns: 40px 40px; grid-auto-rows: 29px; height: 87px; flex: none; justify-items: center; align-items: center; padding-left: 1px; }
.dc { width: 26px; height: 24px; display: flex; align-items: center; justify-content: center; border-radius: 4px; }
.dc .ic { margin: 0; }
.dc-on { background: #c5daf2; }
.dc-arc .car { margin-left: 3px; margin-top: 4px; }
.smart { height: 87px; flex: none; display: flex; flex-direction: column; align-items: center; color: #444; padding-right: 19px; }
.big { width: 38px; height: 40px; margin-top: 5px; }
.smart span { margin-top: 5px; line-height: 20px; }
.smart .car { margin: 7px 0 0; }
.g4 .lab { margin-top: 4px; margin-left: 5px; }
.g5 .lab { margin-top: 4px; margin-left: 2px; }
.g6 .lab { margin-top: 4px; margin-left: -8px; }

/* option bar */
.bar { height: 35px; flex: none; display: flex; align-items: center; background: #f0f0f0; white-space: nowrap; }
.sel { height: 26px; background: #fff; border-radius: 3px; display: flex; align-items: center; justify-content: space-between; padding: 0 8px 0 4px; color: #444; margin-right: 5px; flex: none; }
.sel0 { width: 168px; margin-left: -71px; }
.sel1 { width: 122.500px; }
.sel2 { width: 72px; }
.fld { color: #a0a0a0; }
.num { width: 75px; height: 26px; background: #fff; border-radius: 3px; margin-left: 3px; padding: 0 3px 0 4px; display: flex; align-items: center; justify-content: space-between; color: #aaa; flex: none; }
.spin { display: flex; flex-direction: column; gap: 6px; }
.sp-up { width: 0; height: 0; border-left: 3px solid transparent; border-right: 3px solid transparent; border-bottom: 4px solid #555; }
.spin .car { margin: 0; border-left-width: 3px; border-right-width: 3px; }
.mm { margin-left: 3px; }
.fy { margin-left: 2px; }
.fy + .num { margin-left: 2px; }

/* workspace */
.work { height: 796px; flex: none; display: flex; background: #f5f5f5; }
.nav { width: 105px; flex: none; background: #fff; border-right: 1px solid #e0e0e0; border-bottom: 1px solid #e0e0e0; position: relative; overflow: hidden; display: flex; flex-direction: column; }
.phead { height: 15px; flex: none; background: #e6e6e6; position: relative; }
.x { position: absolute; right: 4px; top: 0; font: 15px/14px "Liberation Sans", sans-serif; color: #a6a6a6; }
.nav-band { height: 26px; flex: none; background: #f0f0f0; border-bottom: 1px solid #e0e0e0; }
.nav-tools { height: 35px; flex: none; border-bottom: 1px solid #e0e0e0; display: flex; justify-content: flex-end; align-items: center; gap: 5px; padding-right: 2px; }
.nbtn { width: 30px; height: 27px; background: #c5daf2; border-radius: 4px; display: flex; align-items: center; justify-content: center; }
.nbtn .ic { margin: 0; }
.list { padding-top: 34px; }
.li { height: 30px; display: flex; align-items: center; justify-content: flex-end; white-space: nowrap; width: 10px; }
.e5 { width: 5px; }
.e10 { width: 10px; }
.e16 { width: 16px; }
.e25 { width: 35px; border-radius: 0 4px 4px 0; padding-right: 10px; }
.e31 { width: 31px; }
.li.on { height: 26px; margin: 2px 0; background: #c5daf2; }
.vbar { position: absolute; left: 91px; top: 306px; width: 9px; height: 434px; background: #c8c8c8; border-radius: 5px; }

.side { width: 349px; margin-left: 6px; flex: none; display: flex; flex-direction: column; gap: 6px; }
.panel { background: #fff; border: 1px solid #e0e0e0; border-top: 0; display: flex; flex-direction: column; }
.p-top { height: 385px; }
.p-bot { height: 404px; }
.ptabs { height: 28px; flex: none; display: flex; background: #f0f0f0; border-bottom: 1px solid #e0e0e0; }
.pt { width: 81px; text-align: center; line-height: 27px; color: #a0a0a0; background: #e0e0e0; border: 1px solid #d4d4d4; border-width: 0 1px; }
.pt.on { background: #f0f0f0; color: #333; font-weight: 700; border: 0; border-right: 1px solid #d4d4d4; }
.ptools { height: 34px; flex: none; border-bottom: 1px solid #e8e8e8; display: flex; align-items: center; white-space: nowrap; }
.pb { display: flex; align-items: center; }
.pb .ic { margin-right: 6px; }
.pb1 { margin-left: 5px; width: 83px; }
.pb2 { width: 72px; }
.pb3 { width: 68px; }
.pb4 { width: 96px; }
.more { width: 12px; height: 23px; border: 1px solid #eee; border-radius: 4px; margin-left: 9px; display: flex; align-items: center; justify-content: center; gap: 1px; }
.more i { width: 0; height: 0; border-top: 3px solid transparent; border-bottom: 3px solid transparent; border-left: 4px solid #555; }
.psearch { height: 24px; flex: none; border-bottom: 1px solid #e6e6e6; display: flex; align-items: center; justify-content: space-between; padding: 0 10px 0 3px; color: #b0b0b0; }
.tree { padding-top: 7px; }
.tr { height: 24px; display: flex; align-items: center; padding-left: 16px; color: #444; }
.tr .car { margin: 0 4px 0 0; border-left-width: 4px; border-right-width: 4px; border-top-width: 5px; }
.leaf { width: 59px; height: 26px; margin: 4px 0 0 50px; background: #c5daf2; border-radius: 4px; text-align: center; line-height: 26px; color: #444; }

.table { display: grid; flex: none; width: 346px; margin-top: 1px; grid-template-columns: 27px 126px 141px 52px; grid-auto-rows: 26.200px; }
.c { border: 1px solid #e2e2e2; border-width: 0 1px 2px 0; display: flex; align-items: center; padding-left: 4px; white-space: nowrap; color: #444; }
.idx { background: #f0f0f0; justify-content: center; padding: 0; border-color: #dadada; }
.idx.blank { background: #fff; }
.h { justify-content: center; padding: 0; }
.blue { color: #3070ea; }
.k { justify-content: center; padding: 0; }
.cb { width: 17px; height: 17px; border: 1px solid #a4a4a4; border-radius: 2px; background: #fff; }
.plus { width: 15px; height: 15px; border: 1px solid #999; border-radius: 3px; font: 12px/12px "Liberation Sans", sans-serif; text-align: center; margin-right: 9px; }
.tfill { flex: 1; }
.tfill-idx { width: 27px; height: 100%; background: #f0f0f0; }

.splitter { width: 5px; flex: none; background: #fff; padding-top: 336px; }
.handle { height: 125px; background: #5a5e63; }

.view { flex: 1; position: relative; overflow: hidden; background: #000; }
.scene { width: 1297px; height: 796px; }
.floor { fill: #404040; }
.f2 { fill: #505050; }
.f3 { fill: #4a4a4a; }
.dk1 { fill: #474747; }
.dk2 { fill: #505050; }
.beam { fill: none; stroke: #585858; stroke-width: 6; }
.bars polygon { fill: #9c9c9c; }
.rim { fill: #9c9c9c; }
.lt1 { fill: #b2b2b2; }
.lt2 { fill: #d4d4d4; }
.or { fill: #c05a27; }
.ord { fill: #a85022; }
.wedge { fill: #9a4a20; }
.wedge2 { fill: #853f1c; }
.wall { fill: #9b481e; }
.grn { fill: none; stroke: #0a7f0a; stroke-width: 1.200; }
.circ { fill: none; stroke: #a9a9a9; stroke-width: 1.300; }
.lb { fill: #f0f0f0; font: 20px "Liberation Sans", sans-serif; }
.ax { font: 20px "Liberation Sans", sans-serif; }
.ax-z { fill: #0000ff; }
.ax-y { fill: #00e000; }
.ax-x { fill: #ff0000; }
.arrow { fill: #ff2015; }

.vtools { position: absolute; right: 0; top: 0; width: 40px; height: 306px; background: #fff; display: flex; flex-direction: column; align-items: center; padding-top: 15px; }
.vt { width: 26px; height: 26px; }
.t2d { fill: #2f8ff0; font: 700 10px "Liberation Sans", sans-serif; }
.dash { stroke-dasharray: 3 2; }
.vcar { margin-left: 0; border-left-width: 4px; border-right-width: 4px; border-top-width: 5px; }
.vsep { width: 29px; height: 1px; background: #888; flex: none; }
.mt7 { margin-top: 7px; }
.mt8 { margin-top: 8px; }
.mt9 { margin-top: 9px; }
.mt10 { margin-top: 10px; }
.mt11 { margin-top: 11px; }

/* status */
.status { height: 20px; flex: 1; display: flex; background: #fff; border-top: 1px solid #ddd; overflow: hidden; white-space: nowrap; color: #444; }
.st { margin-top: 7px; line-height: 20px; }
.s1 { margin-left: -2px; width: 177px; }
.s2 { width: 103px; }
.s3 { width: 169px; }
.s4 { width: 126px; }
.s5 { width: 129px; }
.s6 { margin-left: 9px; }
.sb { height: 24px; margin: 3px 5px 0 0; border: 1px solid #bdbdbd; border-radius: 3px; display: flex; align-items: flex-start; padding-left: 4px; flex: none; background: #fff; }
.sb svg { width: 20px; height: 20px; }
.sb .car { margin: 10px 0 0 2px; }
.sb.on { border-color: #5fa8ee; }
.b1 { width: 30px; }
.b2x { width: 44px; }
.b3x { width: 31px; margin-left: 3px; margin-right: 9px; }
.b4x { width: 43px; }
.b5x { width: 44px; }
.b6x { width: 29px; }
.b7x { width: 29px; }
```
